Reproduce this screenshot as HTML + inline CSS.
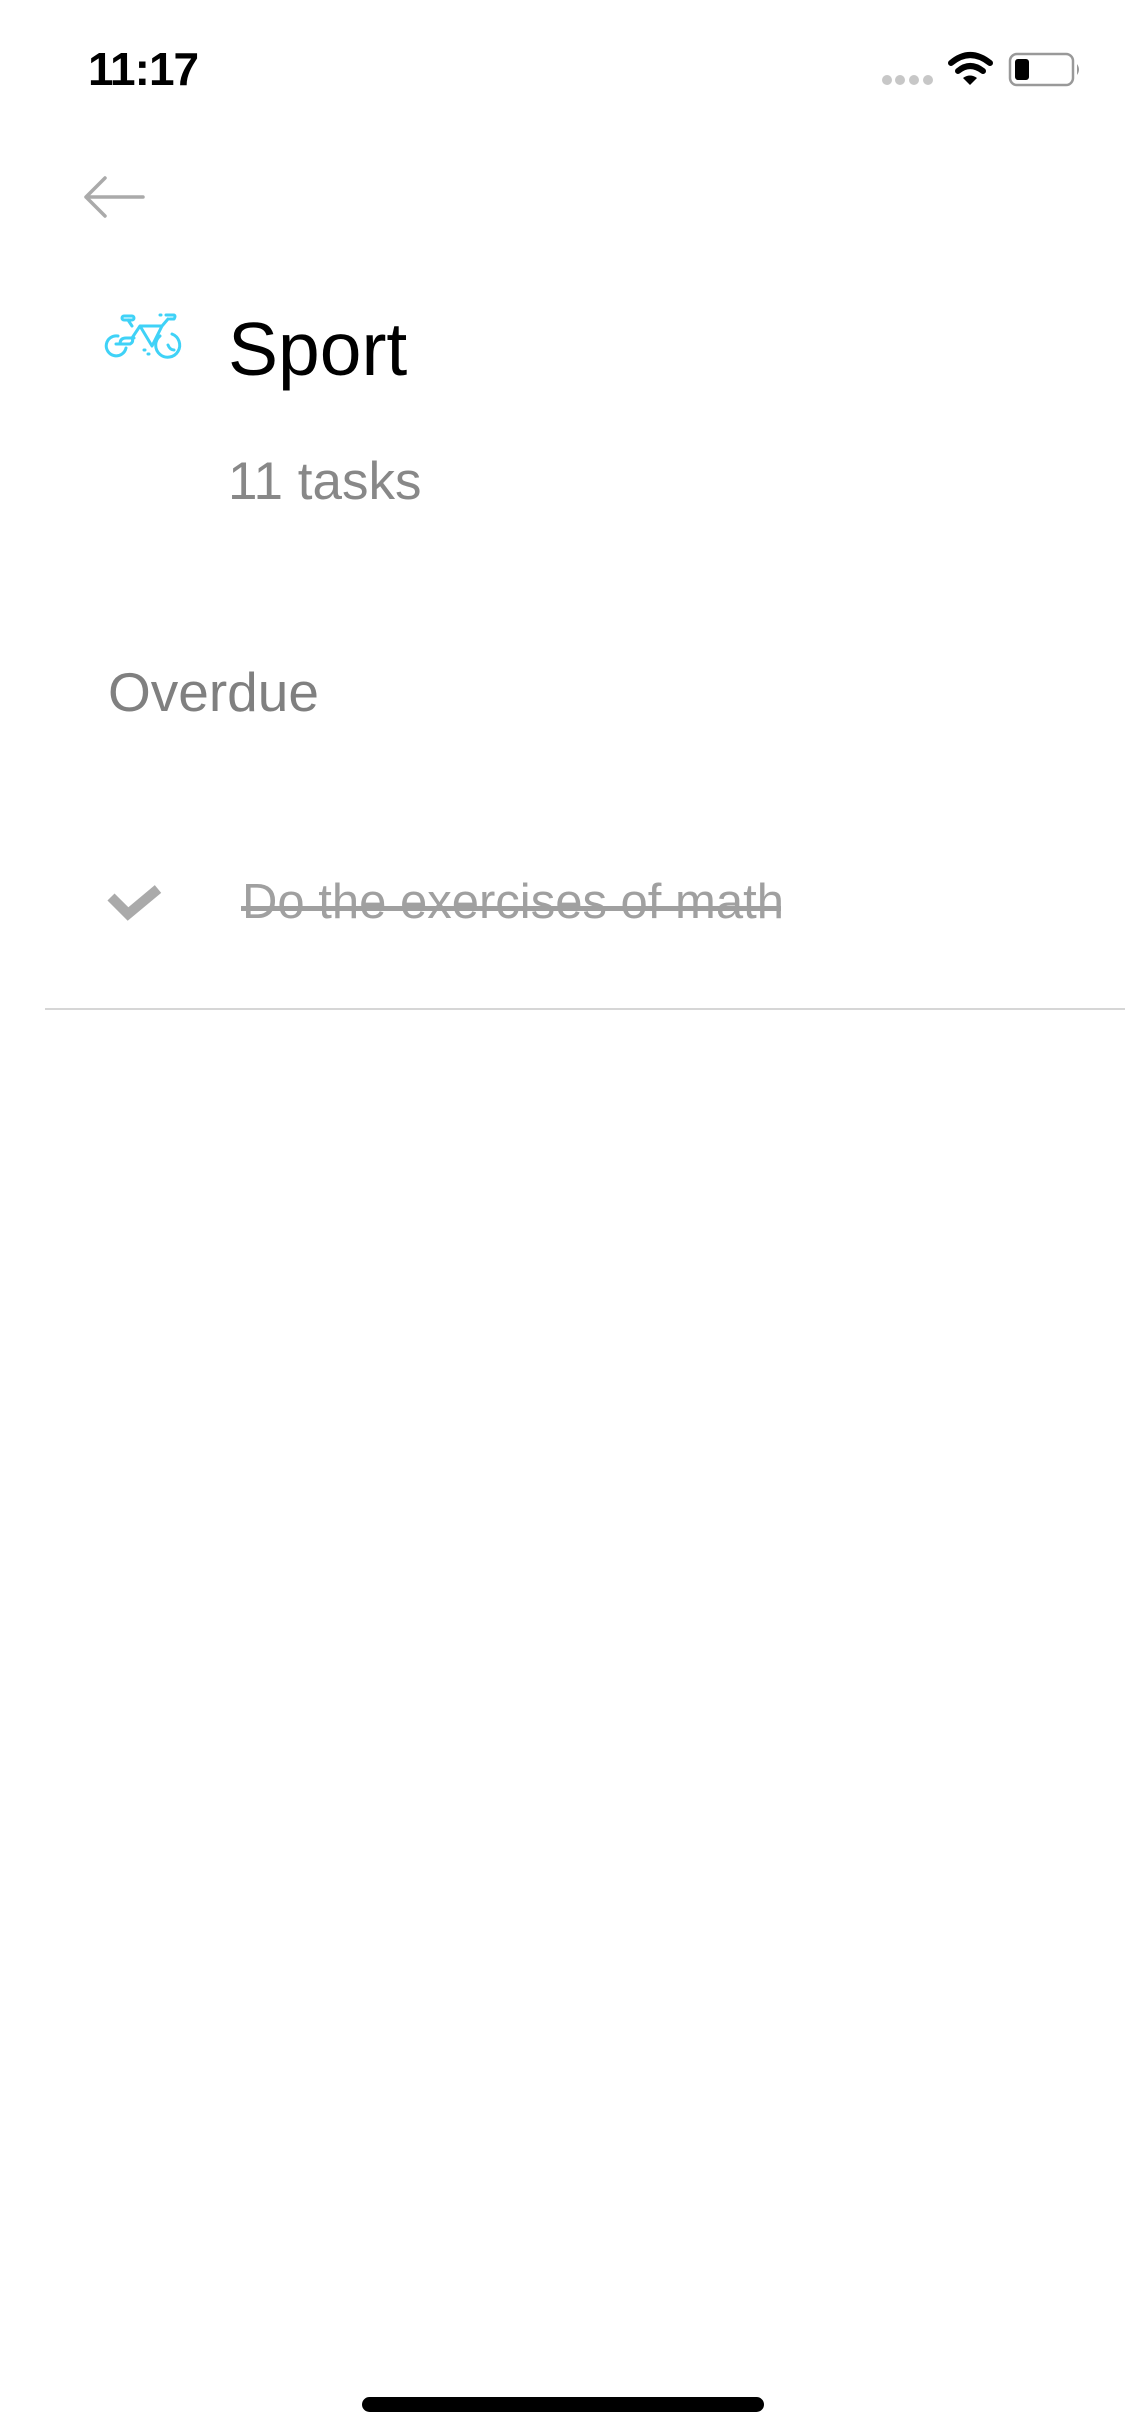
<!DOCTYPE html>
<html><head><meta charset="utf-8"><style>
html,body{margin:0;padding:0;background:#fff;}
body{width:1125px;height:2436px;position:relative;overflow:hidden;font-family:"Liberation Sans",sans-serif;}
.t{position:absolute;line-height:1;white-space:nowrap;}
</style></head><body>
<div class="t" style="left:88px;top:46px;font-size:46px;font-weight:bold;color:#000;letter-spacing:-1px;">11:17</div>
<svg style="position:absolute;left:0;top:0" width="1125" height="120">
  <g fill="#c7c7c7"><circle cx="887" cy="80" r="5"/><circle cx="900" cy="80" r="5"/><circle cx="914" cy="80" r="5"/><circle cx="928" cy="80" r="5"/></g>
  <g fill="none" stroke="#000" stroke-width="6" stroke-linecap="round">
    <path d="M951 63 Q970 47 990 63"/><path d="M958 71 Q970 61 983 71"/>
  </g>
  <path d="M963 78 L970 85 L977 78 Q970 73 963 78Z" fill="#000"/>
  <rect x="1010" y="54" width="63" height="31" rx="7" fill="none" stroke="#999" stroke-width="2.5"/>
  <rect x="1015" y="59" width="14" height="21" rx="3" fill="#000"/>
  <path d="M1077 64 Q1081 69.5 1077 75Z" fill="#999"/>
</svg>
<svg style="position:absolute;left:0;top:0" width="200" height="240">
  <path d="M143 197 L86 197 M105 178 L86 197 L105 216" fill="none" stroke="#aaa" stroke-width="3.5" stroke-linecap="round" stroke-linejoin="round"/>
</svg>
<svg style="position:absolute;left:104px;top:312px" width="80" height="50" viewBox="0 0 80 50" fill="none" stroke="#3fd2f7" stroke-width="3" stroke-linecap="round" stroke-linejoin="round">
  <path d="M14 24 A10 10 0 1 0 22 36"/>
  <path d="M12 32 L26 32 Q30 30 28 26 L36 14 L58 14 M36 14 L48 34 L58 14 L64 7"/>
  <path d="M16 32 Q16 26 22 26 L30 26"/>
  <rect x="18" y="4" width="12" height="4" rx="2"/>
  <path d="M24 8 L28 14"/>
  <path d="M62 3 L70 3 Q72 4 70 7 L66 7"/>
  <path d="M56 3 L57 3"/>
  <path d="M56 24 A12 12 0 1 0 68 22"/>
  <path d="M64 33 Q66 38 70 38"/>
  <path d="M40 38 L41 38"/>
  <path d="M44 42 L45 42"/>
</svg>
<div class="t" style="left:228px;top:312px;font-size:75px;color:#000;">Sport</div>
<div class="t" style="left:228px;top:455px;font-size:53px;color:#888;">11 tasks</div>
<div class="t" style="left:108px;top:665px;font-size:55px;color:#808080;">Overdue</div>
<svg style="position:absolute;left:100px;top:878px" width="70" height="50">
  <path d="M11 19 L28 36 L58 11" fill="none" stroke="#aaa" stroke-width="10"/>
</svg>
<div class="t" style="left:242px;top:878px;font-size:49px;color:#a0a0a0;">Do the exercises of math</div>
<div style="position:absolute;left:241px;top:906px;width:540px;height:5px;background:#a0a0a0;"></div>
<div style="position:absolute;left:45px;top:1008px;width:1080px;height:2px;background:#d6d6d6;"></div>
<div style="position:absolute;left:362px;top:2397px;width:402px;height:15px;border-radius:8px;background:#000;"></div>
</body></html>
